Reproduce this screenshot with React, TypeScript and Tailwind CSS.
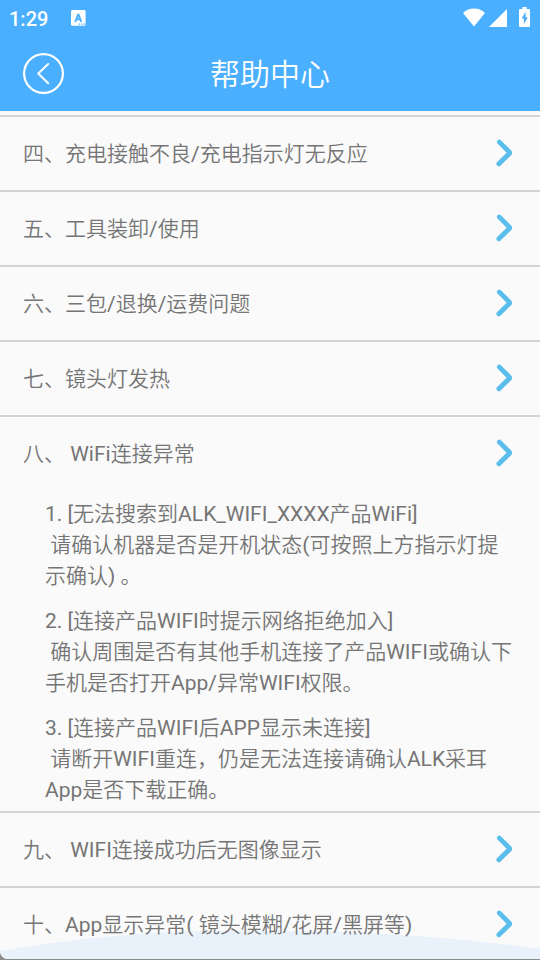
import { useState } from 'react';

type Topic = {
  title: string;
  answers?: string[];
};

const topics: Topic[] = [
  { title: '四、充电接触不良/充电指示灯无反应' },
  { title: '五、工具装卸/使用' },
  { title: '六、三包/退换/运费问题' },
  { title: '七、镜头灯发热' },
  {
    title: '八、 WiFi连接异常',
    answers: [
      '1. [无法搜索到ALK_WIFI_XXXX产品WiFi]\n 请确认机器是否是开机状态(可按照上方指示灯提示确认) 。',
      '2. [连接产品WIFI时提示网络拒绝加入]\n 确认周围是否有其他手机连接了产品WIFI或确认下手机是否打开App/异常WIFI权限。',
      '3. [连接产品WIFI后APP显示未连接]\n 请断开WIFI重连，仍是无法连接请确认ALK采耳App是否下载正确。',
    ],
  },
  { title: '九、 WIFI连接成功后无图像显示' },
  { title: '十、App显示异常( 镜头模糊/花屏/黑屏等)' },
];

function StatusBar() {
  return (
    <div className="flex h-9 items-center pl-[9px] pr-[10px]">
      <span className="pt-[2px] text-[20px] font-medium leading-8">1:29</span>
      <svg className="ml-[23px] size-4" viewBox="0 0 16 16" aria-hidden="true">
        <rect x="0" y="0" width="14.6" height="15.8" rx="1.4" fill="#fff" />
        <path d="M4.3 11.8 7.3 4.2 10.3 11.8M5.4 9.4h3.8" fill="none" stroke="#4aaffe" strokeWidth="1.9" strokeLinejoin="bevel" />
        <path d="M7.8 14.2h1.3M10.2 14.2h1.3M12.6 14.2h1.3" stroke="#4aaffe" strokeWidth="1.3" />
      </svg>
      <div className="ml-auto flex items-center pb-[2px]">
        <svg className="h-[19px] w-6" viewBox="0 0 24 19" aria-hidden="true">
          <path d="M12 18.5 1 5C4 2 8 .6 12 .6S20 2 23 5z" fill="#fff" />
        </svg>
        <svg className="ml-[3px] size-[19px]" viewBox="0 0 19 19" aria-hidden="true">
          <path d="M0 19 18 1v18z" fill="#fff" />
        </svg>
        <svg className="ml-[11px] h-5 w-[11px]" viewBox="0 0 11 20" aria-hidden="true">
          <path d="M3.3 0h4.4v2H10a1 1 0 0 1 1 1v16a1 1 0 0 1-1 1H1a1 1 0 0 1-1-1V3a1 1 0 0 1 1-1h2.3z" fill="#fff" />
          <path d="M6.6 4.8 2.6 11.6h2.3v5.6l3.8-7H6.6z" fill="#4aaffe" />
        </svg>
      </div>
    </div>
  );
}

function Header() {
  return (
    <header className="relative z-10 shrink-0 bg-[#4aaffe] pb-[1px] text-white">
      <StatusBar />
      <div className="grid h-[74px] grid-cols-[1fr_auto_1fr] items-center px-[23px]">
        <button type="button" aria-label="返回" className="size-[41px]">
          <svg viewBox="0 0 41 41" fill="none" stroke="currentColor" strokeWidth="2" aria-hidden="true">
            <circle cx="20.5" cy="20.5" r="19.4" strokeWidth="2.2" />
            <path d="M25.2 11 15.3 20.5 25.2 30.2" strokeLinecap="round" strokeLinejoin="round" />
          </svg>
        </button>
        <h1 className="pt-1 text-[30px] font-normal leading-9">帮助中心</h1>
      </div>
    </header>
  );
}

function Chevron() {
  return (
    <svg className="h-7 w-4 shrink-0 overflow-visible" viewBox="0 0 16 28" fill="none" aria-hidden="true">
      <path d="M3.4 2.1 13.6 12.4V13.2L2.9 23.7" stroke="#5abeec" strokeWidth="4.9" strokeLinecap="round" strokeLinejoin="round" />
    </svg>
  );
}

function TopicRow({ topic, open, onToggle }: { topic: Topic; open: boolean; onToggle: () => void }) {
  return (
    <li className="border-t-2 border-[#d3d3d3]">
      <h2>
        <button
          type="button"
          aria-expanded={open}
          onClick={onToggle}
          className="flex h-[73px] w-full items-center justify-between pl-[23px] pr-7 text-left"
        >
          <span className="whitespace-pre pt-[2px]">{topic.title}</span>
          <Chevron />
        </button>
      </h2>
      {open && topic.answers && (
        <div className="flex flex-col gap-[14px] pb-[5px] pl-[45px] pr-6 pt-[9px]">
          {topic.answers.map((answer) => (
            <p key={answer} className="whitespace-pre-wrap">
              {answer}
            </p>
          ))}
        </div>
      )}
    </li>
  );
}

export default function App() {
  const [openIndex, setOpenIndex] = useState(4);

  return (
    <div
      lang="zh-CN"
      className="h-screen bg-[#8c8c8c] pb-[1px] font-[Roboto,'Noto_Sans_CJK_SC_DemiLight','Noto_Sans_CJK_SC',sans-serif]"
    >
      <div className="relative flex h-full flex-col overflow-hidden rounded-bl-lg bg-[#fafafa]">
        <Header />
        <svg
          className="absolute bottom-0 left-0 h-7 w-full"
          viewBox="0 0 540 28"
          preserveAspectRatio="none"
          aria-hidden="true"
        >
          <path d="M0 20C80 6 165-1 250-1S440 4 540 18V28H0z" fill="#e9f1fa" />
        </svg>
        <main className="relative min-h-0 flex-1 overflow-y-auto pt-1 [scrollbar-width:none]">
          <ul className="text-[21px] font-normal leading-[31px] text-[#757575]">
            {topics.map((topic, i) => (
              <TopicRow
                key={topic.title}
                topic={topic}
                open={openIndex === i}
                onToggle={() => setOpenIndex(openIndex === i ? -1 : i)}
              />
            ))}
          </ul>
        </main>
      </div>
    </div>
  );
}
